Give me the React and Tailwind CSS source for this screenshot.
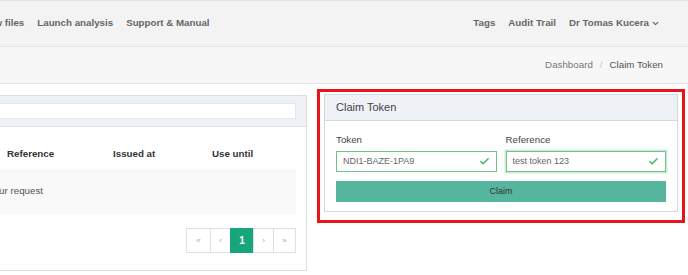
import React from 'react';
import { Check, ChevronDown } from 'lucide-react';

const NAV_LEFT = ['New files', 'Launch analysis', 'Support & Manual'];
const NAV_RIGHT = ['Tags', 'Audit Trail'];

const PAGES = [
  { label: '«', w: 'w-[25px]' },
  { label: '‹', w: 'w-[21px]' },
  { label: '1', w: 'w-[24px]', active: true },
  { label: '›', w: 'w-[21px]' },
  { label: '»', w: 'w-[23px]' },
];

const TokenInput = ({ value, glow }) => (
  <div
    className={`flex items-center h-[21px] border-[1.5px] border-[#6cc485] bg-white px-[6px] ${glow ? 'shadow-[0_0_0_1.5px_rgba(108,196,133,0.35)]' : ''}`}
  >
    <span className="flex-1 text-[9px] text-[#666]">{value}</span>
    <Check size={11} strokeWidth={3} className="text-[#3fb25e]" />
  </div>
);

export default function App() {
  return (
    <div className="w-[688px] h-[275px] overflow-hidden bg-white font-['Liberation_Sans',Arial,sans-serif]">
      {/* top nav */}
      <nav className="h-[46px] bg-[#f3f3f3] border-t border-[#e2e2e2] flex items-center justify-between pr-[28px]">
        <div className="flex gap-[13px] -ml-[18px] text-[9.75px] font-bold text-[#666] whitespace-nowrap">
          {NAV_LEFT.map(n => <span key={n}>{n}</span>)}
        </div>
        <div className="flex items-center gap-[13px] text-[9.75px] font-bold text-[#666] whitespace-nowrap">
          {NAV_RIGHT.map(n => <span key={n}>{n}</span>)}
          <span className="flex items-center gap-[2px]">
            Dr Tomas Kucera <ChevronDown size={9} strokeWidth={3.5} />
          </span>
        </div>
      </nav>

      {/* breadcrumb */}
      <div className="h-[38px] bg-[#f7f7f7] border-y border-[#e4e4e4] flex items-center justify-end pr-[25px] text-[9.75px] whitespace-nowrap">
        <span className="text-[#777]">Dashboard</span>
        <span className="text-[#ccc] mx-[7px]">/</span>
        <span className="text-[#555]">Claim Token</span>
      </div>

      <div className="flex items-start pt-[5px]">
        {/* tokens list panel */}
        <div className="w-[354px] shrink-0 -ml-[47px] mt-[6px] h-[176px] border border-[#dcdfe3] bg-white flex flex-col">
          <div className="h-[31px] bg-[#eef1f5] border-b border-[#dcdfe3] flex items-center pr-[10px] pl-[10px]">
            <div className="flex-1 h-[16px] bg-white border border-[#e3e6ea]" />
          </div>
          <div className="px-[10px] flex flex-col">
            <div className="flex h-[42px] pt-[12px] items-center text-[9.75px] font-bold text-[#333] whitespace-nowrap">
              <div className="w-[37px] px-[6px]">Token</div>
              <div className="w-[106px] px-[6px]">Reference</div>
              <div className="w-[99px] px-[6px]">Issued at</div>
              <div className="flex-1 px-[6px]">Use until</div>
            </div>
            <div className="h-[45px] bg-[#f9f9f9] flex items-center text-[9.75px] text-[#555] whitespace-nowrap">
              <div className="w-[79px] shrink-0 flex justify-end">
                <span>No tokens for your request</span>
              </div>
            </div>
            <div className="flex justify-end mt-[14px]">
              <div className="flex h-[25px]">
                {PAGES.map((p, i) => (
                  <div
                    key={i}
                    className={`${p.w} flex items-center justify-center border -ml-px first:ml-0 ${p.active ? 'bg-[#17a67a] border-[#17a67a] text-white font-bold text-[10px]' : 'bg-white border-[#e0e0e0] text-[#aaa] text-[8px]'}`}
                  >
                    {p.label}
                  </div>
                ))}
              </div>
            </div>
          </div>
        </div>

        {/* highlighted claim panel */}
        <div className="ml-[10px] w-[368px] shrink-0 border-[3px] border-[#e8141c] pt-[2px] px-[4px] pb-[8px]">
          <div className="border border-[#d3d8de] bg-white">
            <div className="h-[26px] bg-[#eef1f5] border-b border-[#d3d8de] flex items-center px-[11px] text-[11px] text-[#444]">
              Claim Token
            </div>
            <div className="px-[11px] pt-[13px] pb-[9px]">
              <div className="grid grid-cols-2 gap-x-[9px]">
                <div>
                  <div className="text-[9.75px] text-[#444] leading-[12px] mb-[5px]">Token</div>
                  <TokenInput value="NDI1-BAZE-1PA9" />
                </div>
                <div>
                  <div className="text-[9.75px] text-[#444] leading-[12px] mb-[5px]">Reference</div>
                  <TokenInput value="test token 123" glow />
                </div>
              </div>
              <button className="mt-[9px] w-full h-[21px] bg-[#55b59f] text-[9px] text-[#333] flex items-center justify-center">
                Claim
              </button>
            </div>
          </div>
        </div>
      </div>
    </div>
  );
}
